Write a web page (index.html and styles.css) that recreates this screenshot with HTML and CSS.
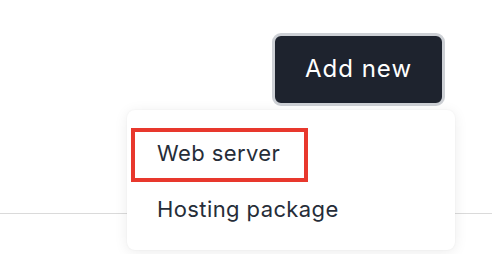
FILE: index.html
```html
<!DOCTYPE html>
<html lang="en">
<head>
  <meta charset="UTF-8">
  <meta name="viewport" content="width=device-width, initial-scale=1.0">
  <title>Add new</title>
  <link rel="stylesheet" href="styles.css">
</head>
<body>
  <div class="page">
    <div class="toolbar">
      <div class="dropdown">
        <button class="add-btn">Add new</button>
        <ul class="menu">
          <li><a href="#" class="menu-item active">Web server</a></li>
          <li><a href="#" class="menu-item">Hosting package</a></li>
        </ul>
      </div>
    </div>
    <div class="divider"></div>
  </div>
</body>
</html>
```

FILE: styles.css
```css
body {
  margin: 0;
  padding: 0;
  background: #fff;
  font-family: Inter, "Noto Sans", sans-serif;
  color: #2a313c;
}
.page {
  width: 492px;
  height: 254px;
  overflow: hidden;
}
.toolbar {
  display: flex;
  justify-content: flex-end;
  padding: 33px 47px 0 0;
}
.dropdown {
  position: relative;
}
.add-btn {
  width: 173px;
  height: 73px;
  padding: 0 0 2px;
  background: #1e232e;
  color: #fff;
  border: 3px solid #cdd0d5;
  border-radius: 9px;
  font-family: inherit;
  font-size: 24px;
  letter-spacing: 1px;
  cursor: pointer;
}
.divider {
  margin-top: 107px;
  border-bottom: 1px solid #dadada;
}
.menu {
  position: absolute;
  top: calc(100% + 4px);
  right: -10px;
  width: 328px;
  box-sizing: border-box;
  margin: 0;
  padding: 18px 0 12px 4px;
  list-style: none;
  background: #fff;
  border-radius: 8px;
  box-shadow: 0 2px 14px rgba(0, 0, 0, 0.08), 0 0 2px rgba(0, 0, 0, 0.05);
  z-index: 2;
}
.menu li + li {
  margin-top: 2px;
}
.menu-item {
  display: inline-block;
  box-sizing: border-box;
  height: 54px;
  line-height: 42px;
  padding: 0 24px 0 22px;
  border: 4px solid transparent;
  color: #262d38;
  font-size: 22px;
  letter-spacing: 0.4px;
  text-decoration: none;
}
.menu-item.active {
  border-color: #e8382d;
}
```
